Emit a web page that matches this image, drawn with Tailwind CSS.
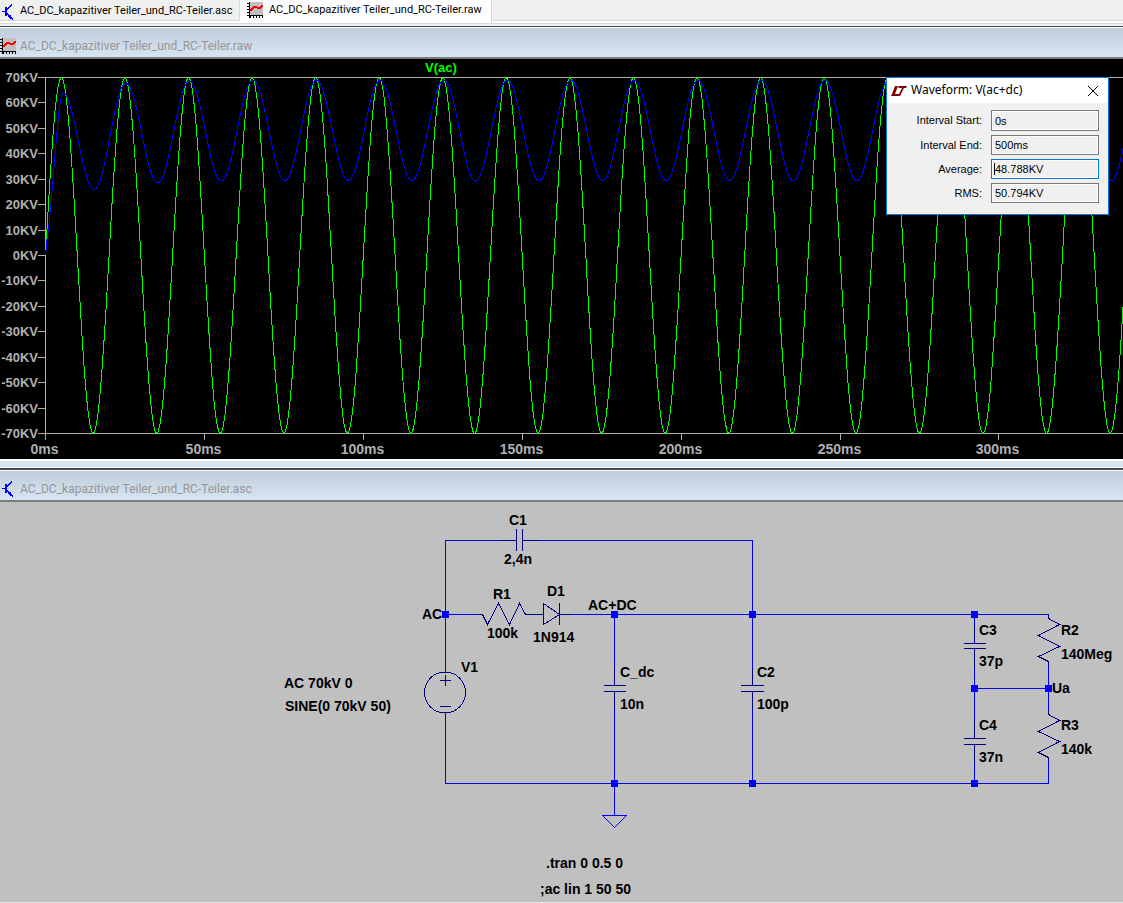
<!DOCTYPE html>
<html lang="de">
<head>
    <meta charset="UTF-8">
    <meta name="viewport" content="width=device-width, initial-scale=1.0">
    <title>AC_DC_kapazitiver Teiler_und_RC-Teiler</title>
    <script src="https://cdn.jsdelivr.net/npm/@tailwindcss/browser@4"></script>
</head>
<body class="min-h-screen flex flex-col overflow-x-hidden bg-[#d7e4f2] font-[Roboto,sans-serif]">
    <!-- Shared icons -->
    <svg class="hidden">
        <symbol id="icon-plot" viewBox="0 0 16 16" shape-rendering="crispEdges">
            <path d="M2 0h14v14H2z" fill="#c0c0c0"/>
            <path d="M2.5 0v16M0 13.5h16M0 1.5h2M0 4.5h2M0 7.5h2M0 10.5h2M3.5 14v2M6.5 14v2M9.5 14v2M12.5 14v2M15.5 14v2" stroke="#000" fill="none"/>
            <path d="M3 7h1v-1h1v-1h1v-1h4v1h3v-1h1v-1h2v2h-1v1h-1v1h-4v-1h-3v1h-1v1h-1v1h-2z" fill="#f00"/>
        </symbol>
        <symbol id="icon-schematic" viewBox="0 0 16 16" shape-rendering="crispEdges">
            <path d="M6 3v9" stroke="#00f" stroke-width="2"/>
            <path d="M2 7.5h4M7 5.5l5-5M7 9.5l5 5" stroke="#00f" fill="none"/>
            <path d="M8 13l2-3 3 5v1z" fill="#00f"/>
        </symbol>
    </svg>

    <!-- Document tabs -->
    <nav class="flex h-[26px] border-b-2 border-[#f0f0f0] bg-[#f0f0f0]">
        <div class="flex w-full h-6 bg-[#f0f0f0] border-b border-[#d9d9d9] shadow-[inset_0_-2px_0_white]">
            <a href="#schematic" class="flex items-center w-60 h-[21px] pt-[3px] border-r border-b border-[#d9d9d9] text-[11px] text-black whitespace-nowrap">
                <svg class="w-4 h-4 mr-1 shrink-0"><use href="#icon-schematic"/></svg>
                AC_DC_kapazitiver Teiler_und_RC-Teiler.asc
            </a>
            <a href="#plot" class="flex items-center w-[252px] h-[23px] pl-[7px] pb-[3px] bg-white border-r border-[#d9d9d9] text-[11px] text-black whitespace-nowrap">
                <svg class="w-4 h-4 mr-[6px] shrink-0"><use href="#icon-plot"/></svg>
                AC_DC_kapazitiver Teiler_und_RC-Teiler.raw
            </a>
            <div class="grow h-[21px] border-b border-[#d9d9d9]"></div>
        </div>
    </nav>

    <!-- Waveform window -->
    <section id="plot" class="border-t border-[#4a4a4f]">
        <header class="flex items-center h-8 pt-[6px] border-t border-b-2 border-t-white border-b-[#7b7b7b] bg-linear-to-b from-[#bfcddb] to-[#d7e4f2]">
            <svg class="w-4 h-4 mr-1 shrink-0"><use href="#icon-plot"/></svg>
            <h1 class="text-xs text-[#969696] whitespace-nowrap">AC_DC_kapazitiver Teiler_und_RC-Teiler.raw</h1>
        </header>
        <div id="plotArea" class="relative bg-black">
            <svg class="block w-full h-[400px] font-['Liberation_Sans',sans-serif] font-bold" fill="none" shape-rendering="crispEdges">
                <g id="axes" stroke="#b0b0b0">
                    <path d="M38 18.5H4000M38 374.5H4000M45.5 18V381"/>
                </g>
                <g id="yLabels" fill="#b0b0b0" text-anchor="end" class="text-[13px]"></g>
                <g id="xLabels" fill="#b0b0b0" text-anchor="middle" class="text-sm"></g>
                <path id="acTrace" stroke="#00ff00"/>
                <path id="acdcTrace" stroke="#0000ff"/>
                <text x="441" y="13" text-anchor="middle" fill="#00ff00" class="text-[13px]">V(ac)</text>
            </svg>

            <!-- Waveform summary dialog -->
            <form class="absolute right-[14px] top-[18px] w-[223px] pb-[11px] bg-[#f0f0f0] border border-[#0078d7] text-[11px] text-black">
                <div class="flex items-center h-[25px] mb-[7px] pl-1 pr-2 bg-white">
                    <svg class="w-4 h-3 mr-1" viewBox="0 0 16 12">
                        <path d="M4 1h3L4 9h4l-1 2H0l1-2zM8 1h8l-1 2h-2l-4 8H7l4-8H7z" fill="#800000"/>
                    </svg>
                    <h2 class="grow pb-[2px] text-xs font-['Noto_Sans',sans-serif]">Waveform: V(ac+dc)</h2>
                    <button type="button" aria-label="Close" class="p-px">
                        <svg class="w-3 h-3" viewBox="0 0 12 12"><path d="M1 1l10 10M11 1L1 11" stroke="#000" fill="none"/></svg>
                    </button>
                </div>
                <div class="grid grid-cols-[95px_108px] gap-x-[9px] gap-y-1 items-center font-['Liberation_Sans',sans-serif]">
                    <label for="start" class="text-right">Interval Start:</label>
                    <input id="start" type="text" readonly value="0s" class="h-[21px] px-[3px] bg-[#f0f0f0] border border-[#7a7a7a] inset-ring inset-ring-white outline-none">
                    <label for="end" class="text-right">Interval End:</label>
                    <input id="end" type="text" readonly value="500ms" class="h-[20px] px-[3px] bg-[#f0f0f0] border border-[#7a7a7a] inset-ring inset-ring-white outline-none">
                    <label for="average" class="text-right">Average:</label>
                    <div class="relative flex">
                        <input id="average" type="text" readonly value="48.788KV" class="w-full h-[20px] px-[3px] bg-[#f0f0f0] border border-[#0078d7] inset-ring inset-ring-white outline-none">
                        <span class="absolute left-[3px] top-1 w-px h-3 bg-black"></span>
                    </div>
                    <label for="rms" class="text-right">RMS:</label>
                    <input id="rms" type="text" readonly value="50.794KV" class="h-[20px] px-[3px] bg-[#f0f0f0] border border-[#7a7a7a] inset-ring inset-ring-white outline-none">
                </div>
            </form>
        </div>
        <div class="h-[9px] border-t-2 border-b border-white bg-[#d7e4f2]"></div>
    </section>

    <!-- Schematic window -->
    <section id="schematic" class="grow flex flex-col border-t-2 border-[#4a4a4f]">
        <header class="flex items-center h-8 pt-[6px] border-t border-b-2 border-t-white border-b-[#7b7b7b] bg-linear-to-b from-[#bfcddb] to-[#d7e4f2]">
            <svg class="w-4 h-4 mr-1 shrink-0"><use href="#icon-schematic"/></svg>
            <h1 class="text-xs text-[#969696] whitespace-nowrap">AC_DC_kapazitiver Teiler_und_RC-Teiler.asc</h1>
        </header>
        <div class="grow bg-[#c0c0c0] border-b border-[#e3e3e3]">
            <svg class="block w-full h-[400px] font-['Liberation_Sans',sans-serif] font-bold text-sm" fill="none" shape-rendering="crispEdges">
                <!-- Wires -->
                <g stroke="#0000ff">
                    <path d="M445.5 170V38.5H500M540 38.5H752.5V166M445 112.5H478M572 112.5H1048.5V116"/>
                    <path d="M445.5 217V281.5H1048.5V260M614.5 112V165M614.5 207V313M752.5 207V281"/>
                    <path d="M974.5 112V124M974.5 166V218M974.5 260V281M974 186.5H1048M1048.5 165V212"/>
                    <path d="M602 313.5H626.5L614.5 325.5L602.5 313.5"/>
                </g>
                <!-- Components -->
                <g stroke="#000080">
                    <path d="M500 38.5H516M523 38.5H540M516.5 27V49M522.5 27V49"/>
                    <path d="M478 112.5H482.5L487.5 122.5L498.5 101.5L509.5 122.5L519.5 101.5L525.5 112.5H543"/>
                    <path d="M543.5 101.5V122.5L559.5 112.5ZM559.5 101V123M560 112.5H572"/>
                    <circle cx="445" cy="190.5" r="20.5"/>
                    <path d="M440 178.5H451M445.5 173V184M440 204.5H451M445.5 211V217"/>
                    <path d="M614.5 165V183M604 183.5H626M604 189.5H626M614.5 190V207"/>
                    <path d="M752.5 166V183M741 183.5H764M741 189.5H764M752.5 190V207"/>
                    <path d="M974.5 124V141M964 141.5H986M964 146.5H986M974.5 147V166"/>
                    <path d="M974.5 218V236M964 236.5H986M964 242.5H986M974.5 243V260"/>
                    <path d="M1048.5 113V116.5L1059.5 122.5L1038.5 133.5L1059.5 144.5L1038.5 154.5L1048.5 159.5V165"/>
                    <path d="M1048.5 208V212.5L1059.5 218.5L1038.5 229.5L1059.5 239.5L1038.5 250.5L1048.5 255.5V260"/>
                </g>
                <!-- Nodes -->
                <path fill="#0000ff" d="M442 109h7v7h-7zM611 109h7v7h-7zM749 109h7v7h-7zM971 109h7v7h-7zM971 183h7v7h-7zM1045 183h7v7h-7zM611 278h7v7h-7zM749 278h7v7h-7zM971 278h7v7h-7z"/>
                <!-- Labels -->
                <g fill="#000">
                    <text x="509" y="23">C1</text>
                    <text x="504" y="62">2,4n</text>
                    <text x="493" y="97">R1</text>
                    <text x="487" y="136">100k</text>
                    <text x="547" y="94">D1</text>
                    <text x="533" y="140">1N914</text>
                    <text x="588" y="108">AC+DC</text>
                    <text x="422" y="117">AC</text>
                    <text x="461" y="170">V1</text>
                    <text x="284" y="186">AC 70kV 0</text>
                    <text x="285" y="209">SINE(0 70kV 50)</text>
                    <text x="620" y="175">C_dc</text>
                    <text x="620" y="207">10n</text>
                    <text x="757" y="175">C2</text>
                    <text x="757" y="207">100p</text>
                    <text x="979" y="133">C3</text>
                    <text x="979" y="164">37p</text>
                    <text x="1061" y="133">R2</text>
                    <text x="1061" y="157">140Meg</text>
                    <text x="1052" y="191">Ua</text>
                    <text x="979" y="228">C4</text>
                    <text x="979" y="260">37n</text>
                    <text x="1061" y="228">R3</text>
                    <text x="1061" y="252">140k</text>
                    <text x="546" y="366">.tran 0 0.5 0</text>
                    <text x="540" y="392">;ac lin 1 50 50</text>
                </g>
            </svg>
        </div>
    </section>

    <script>
        const SVG = 'http://www.w3.org/2000/svg';
        const X0 = 45.5;          // 0ms
        const Y0 = 196.5;         // 0KV
        const PX_PER_MS = 3.178;
        const PX_PER_KV = 2.543;

        function addText(group, x, y, label) {
            const text = document.createElementNS(SVG, 'text');
            text.setAttribute('x', x);
            text.setAttribute('y', y);
            text.textContent = label;
            document.getElementById(group).appendChild(text);
        }

        function addTick(d) {
            const path = document.createElementNS(SVG, 'path');
            path.setAttribute('d', d);
            document.getElementById('axes').appendChild(path);
        }

        // Axis ticks and labels
        for (let kv = -70; kv <= 70; kv += 10) {
            const y = Math.floor(Y0 - kv * PX_PER_KV) + 0.5;
            addTick(`M38 ${y}H45`);
            addText('yLabels', 38, y + 4, kv + 'KV');
        }
        const plotWidth = document.getElementById('plotArea').clientWidth;
        for (let ms = 0; X0 + ms * PX_PER_MS < plotWidth - 24; ms += 50) {
            const x = Math.floor(X0 + ms * PX_PER_MS) + 0.5;
            addTick(`M${x} 375V381`);
            addText('xLabels', x - 1, 395, ms + 'ms');
        }

        // V(ac): 70kV, 50Hz
        const ac = [];
        for (let t = 0; t <= 500; t += 0.5) {
            const v = 70 * Math.sin(2 * Math.PI * t / 20);
            ac.push((X0 + t * PX_PER_MS).toFixed(1) + ' ' + (Y0 - v * PX_PER_KV).toFixed(1));
        }
        document.getElementById('acTrace').setAttribute('d', 'M' + ac.join('L'));

        // V(ac+dc): start-up ramp, then swings between the settled peaks
        const acdc = ['45.5 196', '47 180', '49 166', '51 145', '53 120', '55 96', '57 72', '59 52', '61 39', '62.5 35', '64 33'];
        const peaks = [64.3, 67.7, 68.7];
        const valleys = [26, 28.5, 29.2];
        function swing(t, from, to) {
            for (let i = 1; i <= 20; i++) {
                const v = from + (to - from) * (1 - Math.cos(Math.PI * i / 20)) / 2;
                acdc.push((X0 + (t + i / 2) * PX_PER_MS).toFixed(1) + ' ' + (Y0 - v * PX_PER_KV).toFixed(1));
            }
        }
        for (let n = 0; n < 24; n++) {
            const peak = peaks[n] || 69;
            const valley = valleys[n] || 29.4;
            const t = 5.3 + n * 20;
            swing(t, peak, valley);
            swing(t + 10, valley, peaks[n + 1] || 69);
        }
        document.getElementById('acdcTrace').setAttribute('d', 'M' + acdc.join('L'));
    </script>
</body>
</html>
